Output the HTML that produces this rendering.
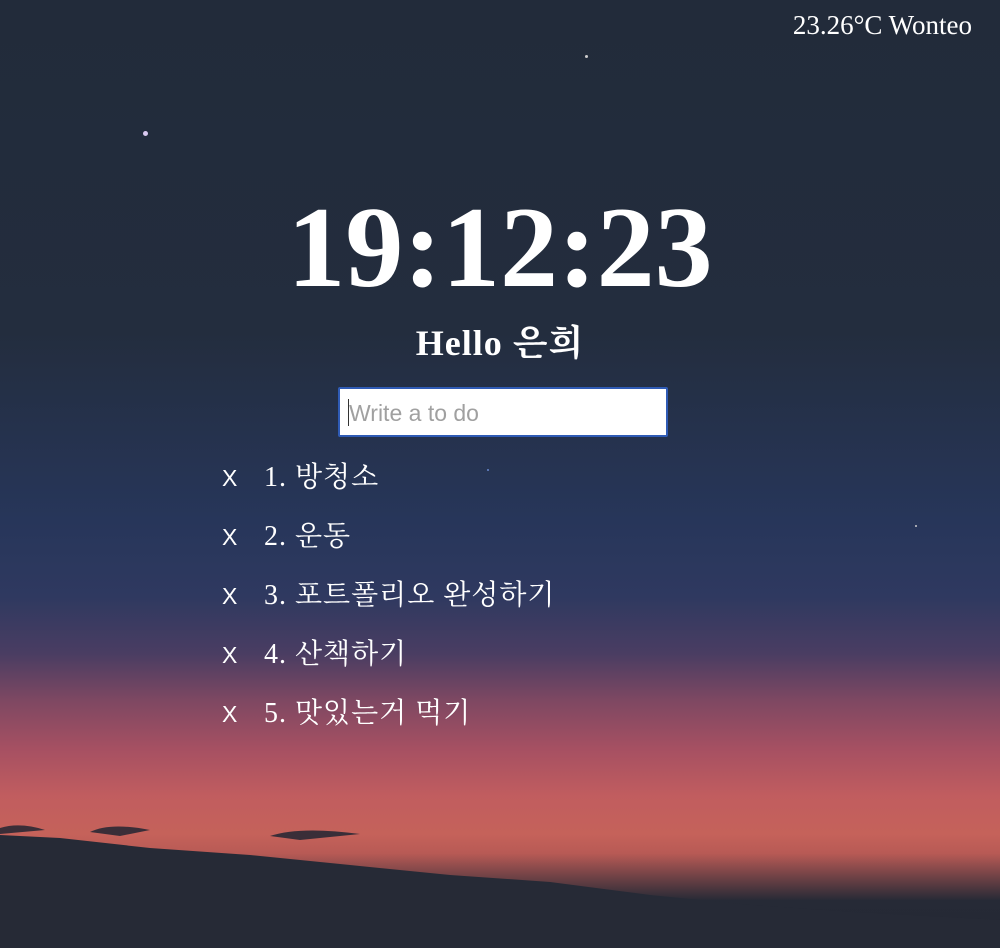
<!DOCTYPE html>
<html><head><meta charset="utf-8"><style>
html,body{margin:0;padding:0;width:1000px;height:948px;overflow:hidden}
body{position:relative;font-family:"Liberation Serif","Noto Serif CJK SC",serif;color:#fff;
background:linear-gradient(180deg,#222b3a 0%,#232d3e 35%,#27365a 55%,#2f3960 63%,#4a3d62 69%,#7f4862 74%,#a65062 79%,#c15d5f 84%,#c5625a 88%,#b85a55 90%,#262a36 95%,#232733 100%);}
.hill{position:absolute;left:0;top:820px;width:1000px;height:128px}
.weather{position:absolute;right:28px;top:10px;font-size:27px}
.clock{position:absolute;left:0;width:1000px;top:183px;text-align:center;font-weight:bold;font-size:116px;line-height:130px}
.hello{position:absolute;left:0;width:1000px;top:315px;text-align:center;font-weight:bold;font-size:36px;letter-spacing:1px}
.inp{position:absolute;left:338px;top:387px;width:326px;height:46px;background:#fff;border:2px solid #2f5bb5;border-radius:2px;font-family:"Liberation Sans",sans-serif;font-size:23px;color:#a0a0a0;line-height:48px;text-indent:9px}
.inp:before{content:"";position:absolute;left:8px;top:10px;width:1px;height:27px;background:#333}
.li{position:absolute;left:222px;font-size:28px;letter-spacing:1px}
.li span{font-family:"Liberation Sans",sans-serif;font-size:23px;display:inline-block;width:42px;letter-spacing:0}
.star{position:absolute;width:2px;height:2px;background:#ccc;border-radius:50%}
</style></head><body>
<svg class="hill" viewBox="0 0 1000 128" preserveAspectRatio="none"><path d="M0 15 L60 18 L150 28 L250 35 L350 45 L450 55 L550 62 L650 75 L750 85 L850 92 L1000 100 L1000 128 L0 128Z" fill="#262a36"/><path d="M0 8 Q20 2 45 10 L0 14Z M90 12 Q110 2 150 10 L120 16Z M270 16 Q300 6 360 14 L300 20Z" fill="#3a2e38"/></svg>
<div class="star" style="left:143px;top:131px;width:5px;height:5px;background:#d9c9f0"></div>
<div class="star" style="left:585px;top:55px;width:3px;height:3px"></div>
<div class="star" style="left:915px;top:525px"></div>
<div class="star" style="left:487px;top:469px;background:#6a8ad0"></div>
<div class="weather">23.26°C Wonteo</div>
<div class="clock">19:12:23</div>
<div class="hello">Hello 은희</div>
<div class="inp">Write a to do</div>
<div class="li" style="top:455px"><span>X</span>1. 방청소</div>
<div class="li" style="top:514px"><span>X</span>2. 운동</div>
<div class="li" style="top:573px"><span>X</span>3. 포트폴리오 완성하기</div>
<div class="li" style="top:632px"><span>X</span>4. 산책하기</div>
<div class="li" style="top:691px"><span>X</span>5. 맛있는거 먹기</div>
</body></html>
